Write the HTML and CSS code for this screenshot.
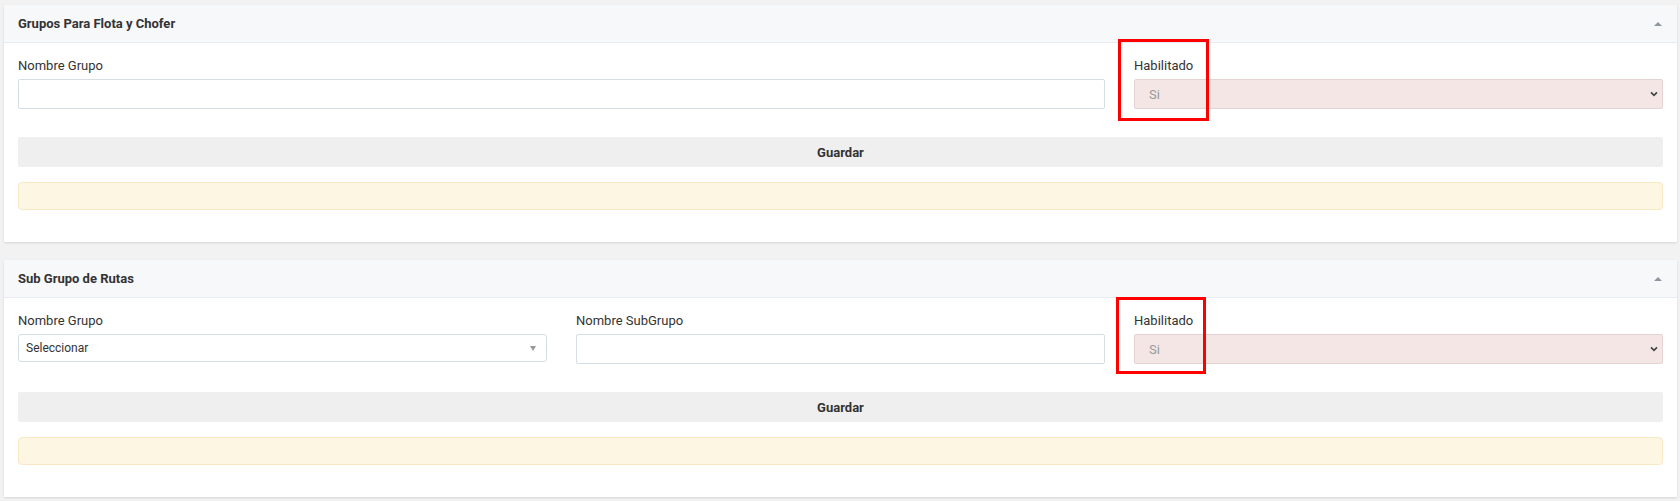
FILE: index.html
```html
<!DOCTYPE html>
<html lang="es">
<head>
<meta charset="utf-8">
<title>Grupos</title>
<link rel="stylesheet" href="styles.css">
</head>
<body>
<div class="page">
  <section class="card">
    <header class="card-head">
      <span class="card-title">Grupos Para Flota y Chofer</span>
      <span class="collapse-arrow"></span>
    </header>
    <div class="card-body">
      <div class="row row-2">
        <div class="field">
          <label class="lbl">Nombre Grupo</label>
          <div class="input"></div>
        </div>
        <div class="field">
          <label class="lbl">Habilitado</label>
          <div class="select-pink"><span>Si</span>
            <svg class="chev" width="8" height="6" viewBox="0 0 8 6"><path d="M1 1.3 L4 4.3 L7 1.3" fill="none" stroke="#444" stroke-width="1.7"/></svg>
          </div>
        </div>
      </div>
      <div class="btn">Guardar</div>
      <div class="alert"></div>
    </div>
    <div class="mark mark-1"></div>
  </section>

  <section class="card">
    <header class="card-head">
      <span class="card-title">Sub Grupo de Rutas</span>
      <span class="collapse-arrow"></span>
    </header>
    <div class="card-body">
      <div class="row row-3">
        <div class="field">
          <label class="lbl">Nombre Grupo</label>
          <div class="select2"><span>Seleccionar</span><span class="tri"></span></div>
        </div>
        <div class="field">
          <label class="lbl">Nombre SubGrupo</label>
          <div class="input"></div>
        </div>
        <div class="field">
          <label class="lbl">Habilitado</label>
          <div class="select-pink"><span>Si</span>
            <svg class="chev" width="8" height="6" viewBox="0 0 8 6"><path d="M1 1.3 L4 4.3 L7 1.3" fill="none" stroke="#444" stroke-width="1.7"/></svg>
          </div>
        </div>
      </div>
      <div class="btn">Guardar</div>
      <div class="alert"></div>
    </div>
    <div class="mark mark-2"></div>
  </section>
</div>
</body>
</html>
```
FILE: styles.css
```css
* { box-sizing: border-box; }
html, body { margin: 0; padding: 0; }
body {
  background: #f2f2f2;
  font-family: Roboto, "Liberation Sans", Arial, sans-serif;
  color: #333;
  font-size: 13px;
}
.page {
  padding: 5px 3px 0 4px;
}
.card {
  position: relative;
  background: #fff;
  margin-bottom: 18px;
  box-shadow: 0 1px 2px rgba(0,0,0,0.12);
}
.card-head {
  height: 38px;
  background: #f7f8fa;
  border-bottom: 1px solid #e8ebef;
  display: flex;
  align-items: center;
  justify-content: space-between;
  padding: 0 15px 0 14px;
}
.card-title {
  font-weight: 700;
  font-size: 13px;
  color: #333;
}
.collapse-arrow {
  width: 0; height: 0;
  border-left: 4px solid transparent;
  border-right: 4px solid transparent;
  border-bottom: 4px solid #8e979f;
}
.card-body {
  padding: 14px 14px 32px;
}
.row {
  display: grid;
  column-gap: 29px;
  margin-bottom: 28px;
}
.row-2 { grid-template-columns: 1087px 1fr; }
.row-3 { grid-template-columns: 1fr 1fr 1fr; }
.lbl {
  display: block;
  font-size: 13px;
  line-height: 18px;
  margin-bottom: 4px;
  color: #333;
}
.input {
  height: 30px;
  border: 1px solid #d5dde5;
  border-radius: 2px;
  background: #fff;
}
.select-pink {
  height: 30px;
  border: 1px solid #e3d3d3;
  border-radius: 2px;
  background: #f5e6e6;
  display: flex;
  align-items: center;
  justify-content: space-between;
  padding: 0 4px 0 14px;
  color: #999;
  font-size: 13px;
}
.chev { display: block; }
.select2 {
  height: 28px;
  border: 1px solid #d5dde5;
  border-radius: 3px;
  background: #fff;
  display: flex;
  align-items: center;
  justify-content: space-between;
  padding: 0 10px 0 7px;
  font-size: 12px;
  color: #333;
}
.tri {
  width: 0; height: 0;
  border-left: 3px solid transparent;
  border-right: 3px solid transparent;
  border-top: 5px solid #999;
}
.btn {
  height: 30px;
  background: #efefef;
  border-radius: 2px;
  display: flex;
  align-items: center;
  justify-content: center;
  font-weight: 700;
  font-size: 13px;
  color: #333;
  margin-bottom: 15px;
}
.alert {
  height: 28px;
  background: #fdf6e3;
  border: 1px solid #f8e8c3;
  border-radius: 4px;
}
.mark {
  position: absolute;
  border: 3px solid #f00;
}
.mark-1 { left: 1114px; top: 34px; width: 91px; height: 82px; }
.mark-2 { left: 1112px; top: 37px; width: 90px; height: 77px; }
```
